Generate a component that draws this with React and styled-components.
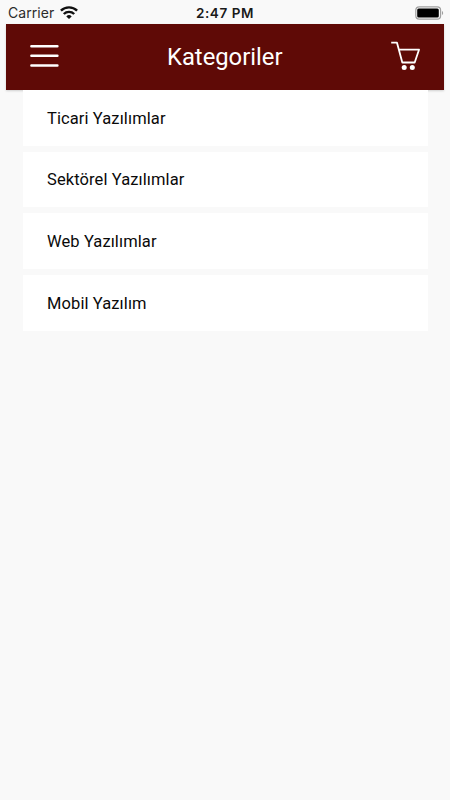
import React from "react";
import styled, { createGlobalStyle } from "styled-components";

const GlobalStyle = createGlobalStyle`
  * { box-sizing: border-box; }
  body { margin: 0; background: #f9f9f9; }
`;

const Screen = styled.div`
  display: flex;
  flex-direction: column;
  width: 450px;
  height: 800px;
  background: #f9f9f9;
  font-family: Roboto, sans-serif;
  color: #0a0a0a;
`;

const StatusBar = styled.div`
  display: grid;
  grid-template-columns: 1fr auto 1fr;
  align-items: center;
  height: 24px;
  padding: 0 6px 0 8px;
  font-family: Inter, sans-serif;
  line-height: 24px;
`;

const Carrier = styled.div`
  display: flex;
  align-items: center;
  gap: 6px;
  padding-top: 1px;
  font-size: 14px;
  letter-spacing: 0.05px;
  color: #2c2c2c;
`;

const Clock = styled.div`
  margin-right: 2px;
  padding-top: 1px;
  font-size: 13.5px;
  font-weight: 600;
  letter-spacing: 0.55px;
  color: #1a1a1a;
`;

const BatterySlot = styled.div`
  display: flex;
  justify-content: flex-end;
`;

const Header = styled.header`
  display: flex;
  align-items: center;
  justify-content: space-between;
  height: 66px;
  margin: 0 6px;
  padding: 0 23.5px 2px 24px;
  background: #5f0a06;
  color: #fff;
  box-shadow: 0 1px 2px rgba(0, 0, 0, 0.16);
`;

const IconButton = styled.button`
  display: flex;
  padding: 0;
  border: 0;
  background: none;
  color: inherit;
`;

const Title = styled.h1`
  margin: 2px 0 0;
  font-size: 23.8px;
  font-weight: 400;
  line-height: 28px;
`;

const CategoryList = styled.main`
  display: flex;
  flex-direction: column;
  gap: 6px;
  margin: 0 22px 0 23px;
  z-index: 1;
`;

const CategoryRow = styled.div`
  display: flex;
  align-items: center;
  height: 55.7px;
  padding: 0.8px 24px 0;
  background: #fff;
  font-size: 16.5px;
  letter-spacing: 0.1px;
`;

const categories = ["Ticari Yazılımlar", "Sektörel Yazılımlar", "Web Yazılımlar", "Mobil Yazılım"];

function WifiIcon() {
  return (
    <svg width="18" height="14" viewBox="0 0 18 14" fill="none" stroke="#111" strokeWidth="2.4">
      <path d="M0.9 4.7a11.6 11.6 0 0 1 16.2 0" />
      <path d="M3.8 8a7.4 7.4 0 0 1 10.4 0" />
      <path d="M9 13.1 6.3 10.4a3.9 3.9 0 0 1 5.4 0Z" fill="#111" stroke="none" />
    </svg>
  );
}

function BatteryIcon() {
  return (
    <svg width="29" height="14" viewBox="0 0 29 14">
      <rect x="0.8" y="0.8" width="24.8" height="12.4" rx="3.4" fill="none" stroke="#a0a0a0" strokeWidth="1.2" />
      <rect x="2.2" y="2.4" width="21.6" height="9.2" rx="1.5" fill="#000" />
      <path d="M27 5a2.3 2.3 0 0 1 0 4Z" fill="#a0a0a0" />
    </svg>
  );
}

function MenuIcon() {
  return (
    <svg width="29" height="24" viewBox="0 0 29 24" stroke="#fff" strokeWidth="2.5" strokeLinecap="round">
      <path d="M1.4 2.2h26M1.4 11.8h26M1.4 21.5h26" />
    </svg>
  );
}

function CartIcon() {
  return (
    <svg width="30" height="30" viewBox="0 0 30 30" fill="none" stroke="#fff" strokeWidth="1.8" strokeLinejoin="round">
      <path d="M1.2 1.7H7L12.3 21.5h12.4L29 8.7H9" />
      <circle cx="14.2" cy="26.6" r="2.5" fill="#fff" stroke="none" />
      <circle cx="22.3" cy="26.6" r="2.5" fill="#fff" stroke="none" />
    </svg>
  );
}

export default function App() {
  return (
    <Screen>
      <GlobalStyle />
      <StatusBar>
        <Carrier>Carrier <WifiIcon /></Carrier>
        <Clock>2:47 PM</Clock>
        <BatterySlot><BatteryIcon /></BatterySlot>
      </StatusBar>
      <Header>
        <IconButton aria-label="Menü"><MenuIcon /></IconButton>
        <Title>Kategoriler</Title>
        <IconButton aria-label="Sepet"><CartIcon /></IconButton>
      </Header>
      <CategoryList>
        {categories.map((name) => <CategoryRow key={name}>{name}</CategoryRow>)}
      </CategoryList>
    </Screen>
  );
}
